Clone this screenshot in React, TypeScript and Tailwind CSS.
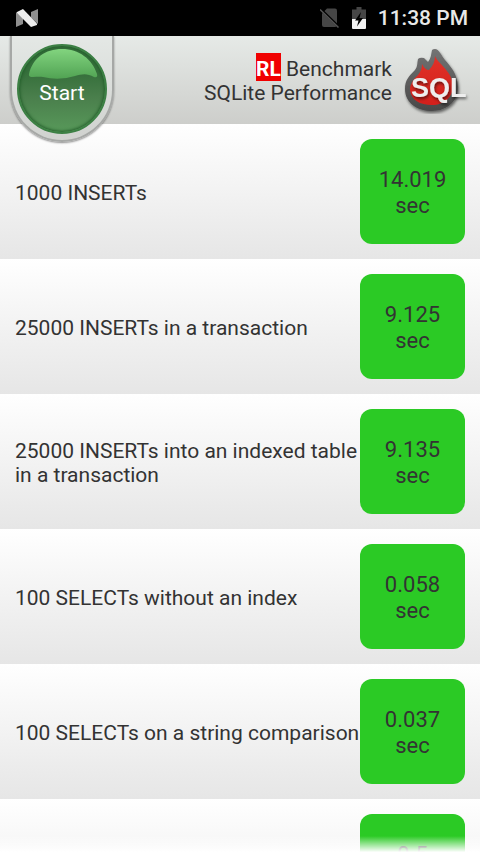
const results = [
  { name: "1000 INSERTs", time: "14.019" },
  { name: "25000 INSERTs in a transaction", time: "9.125" },
  { name: "25000 INSERTs into an indexed table in a transaction", time: "9.135" },
  { name: "100 SELECTs without an index", time: "0.058" },
  { name: "100 SELECTs on a string comparison", time: "0.037" },
  { name: "", time: "0.5" },
];

function StatusBar() {
  return (
    <div className="flex h-9 shrink-0 items-center bg-black pr-3 pl-4 text-[#e8e8e8]">
      <svg width="22" height="18" viewBox="0 0 22 18" aria-hidden="true">
        <path d="M0 3 L7 9 V15 L0 18 Z" fill="#8f8f8f" />
        <path d="M15 3 L22 0 V15 L15 8.5 Z" fill="#8f8f8f" />
        <path d="M1 3 L7 0 L21 14.5 V16 L15 18 L1 4 Z" fill="#ececec" />
      </svg>
      <div className="ml-auto flex items-center">
        <svg width="20" height="20" viewBox="0 0 20 20" aria-hidden="true">
          <path d="M7 0.500 H15 Q17 0.500 17 2.500 V17 Q17 19 15 19 H4 Q2 19 2 17 V5.500 Z" fill="#464646" />
          <path d="M-0.500 0 L19.500 19.500" stroke="#000" strokeWidth="2.500" />
          <path d="M0 1.500 L18.500 19.500" stroke="#555" strokeWidth="1.500" />
        </svg>
        <svg className="mx-3" width="14" height="22" viewBox="0 0 14 22" aria-hidden="true">
          <path d="M0 2.500 H4.500 V0 H9.500 V2.500 H14 V12 H0 Z" fill="#464646" />
          <path d="M0 12 H14 V21 Q14 22 13 22 H1 Q0 22 0 21 Z" fill="#f2f2f2" />
          <path d="M9 5 L3 13.500 H6.500 L5 19.500 L11 11 H7.500 Z" fill="#000" />
        </svg>
        <span className="text-[21px] leading-6 font-medium">11:38 PM</span>
      </div>
    </div>
  );
}

function SqlLogo() {
  return (
    <svg width="68" height="68" viewBox="0 0 68 68" role="img" aria-label="SQL">
      <defs>
        <filter id="shadow" x="-20%" y="-20%" width="150%" height="150%">
          <feDropShadow dx="1" dy="2" stdDeviation="1.600" floodColor="#000" floodOpacity="0.550" />
        </filter>
        <linearGradient id="rim" x1="0" y1="0" x2="0" y2="1">
          <stop offset="0" stopColor="#747474" />
          <stop offset="1" stopColor="#484848" />
        </linearGradient>
        <linearGradient id="flame" x1="0" y1="0" x2="0" y2="1">
          <stop offset="0" stopColor="#e03228" />
          <stop offset="1" stopColor="#d31f1b" />
        </linearGradient>
      </defs>
      <path
        d="M28 4 C27 9 27 12 24 16 L20 12 Q16 11 14 13 C13 17 14 20 11 24 C5 30 1 34 1 43 C1 57 13 65 28 65 C44 65 55 54 54 40 C53 27 47 21 41 14 C37 9 35 3 31 3 Q29 3 28 4 Z"
        fill="url(#rim)"
        filter="url(#shadow)"
      />
      <path
        d="M31 10 C31 15 29 20 25 24 Q21 24 18 18 C18 22 17 25 14 29 C9 34 6 38 6 44 C7 54 16 59 28 59 C40 59 49 51 49 40 C48 29 43 25 37 18 C34 15 32 13 31 10 Z"
        fill="url(#flame)"
      />
      <text
        className="font-['Liberation_Sans',sans-serif]"
        x="7"
        y="51"
        fontSize="27"
        fontWeight="700"
        fill="#eeeeee"
        filter="url(#shadow)"
      >
        SQL
      </text>
    </svg>
  );
}

function StartButton() {
  return (
    <div className="absolute top-0 left-2.5 h-[106px] w-[104px] rounded-b-[52px] border-2 border-t-0 border-[#a6a8a6] bg-linear-to-b from-[#e4e8e5] to-[#d0d2cf] px-[5px] pt-2 shadow-[0_1px_2px_#00000070]">
      <button
        type="button"
        className="relative flex h-[90px] w-[90px] items-center justify-center overflow-hidden rounded-full border-2 border-[#3c8044] bg-linear-to-b from-[#356f3b] from-30% via-[#4a7f4c] via-60% to-[#58995a] pt-2 text-[21px] leading-6 text-white shadow-[inset_0_0_3px_1px_#245f2b]"
      >
        <svg className="absolute top-0 left-0" width="86" height="86" viewBox="0 0 86 86" aria-hidden="true">
          <defs>
            <linearGradient id="gloss" x1="0" y1="0" x2="0" y2="1">
              <stop offset="0" stopColor="#82d47f" />
              <stop offset="1" stopColor="#51a353" />
            </linearGradient>
          </defs>
          <path
            d="M10 28 C14 12 26 3 43 3 C60 3 73 13 78 28 Q79 32 75 31 C68 27 63 28 56 30 Q40 35 24 31 C17 30 9 33 10 28 Z"
            fill="url(#gloss)"
          />
        </svg>
        <span className="relative">Start</span>
      </button>
    </div>
  );
}

export default function App() {
  return (
    <div className="relative flex h-screen flex-col overflow-hidden bg-white font-[Roboto,sans-serif] text-[#333]">
      <StatusBar />
      <header className="relative z-10 flex h-[88px] shrink-0 items-center justify-end gap-3 bg-linear-to-b from-[#e6eae7] to-[#cdcecb] pr-2">
        <StartButton />
        <h1 className="pt-0.5 text-right text-[21px] leading-6">
          <span className="bg-[#f00000] pt-1 font-bold text-white">RL</span> Benchmark
          <br />
          SQLite Performance
        </h1>
        <SqlLogo />
      </header>
      <ul className="min-h-0 flex-1 overflow-hidden">
        {results.map((result) => (
          <li
            key={result.time}
            className="flex h-[135px] items-center bg-linear-to-b from-white to-[#e6e6e6] pr-[15px] pl-[15px]"
          >
            <span className="min-w-0 flex-1 pt-0.5 text-[21px] leading-6">{result.name}</span>
            <div className="flex size-[105px] shrink-0 flex-col items-center justify-center rounded-xl bg-[#2bca25] pt-0.5 text-[22px] leading-[26px]">
              <span>{result.time}</span>
              <span>sec</span>
            </div>
          </li>
        ))}
      </ul>
      <div className="pointer-events-none absolute inset-x-0 bottom-0 h-[18px] bg-linear-to-b from-transparent to-white to-90%" />
    </div>
  );
}
